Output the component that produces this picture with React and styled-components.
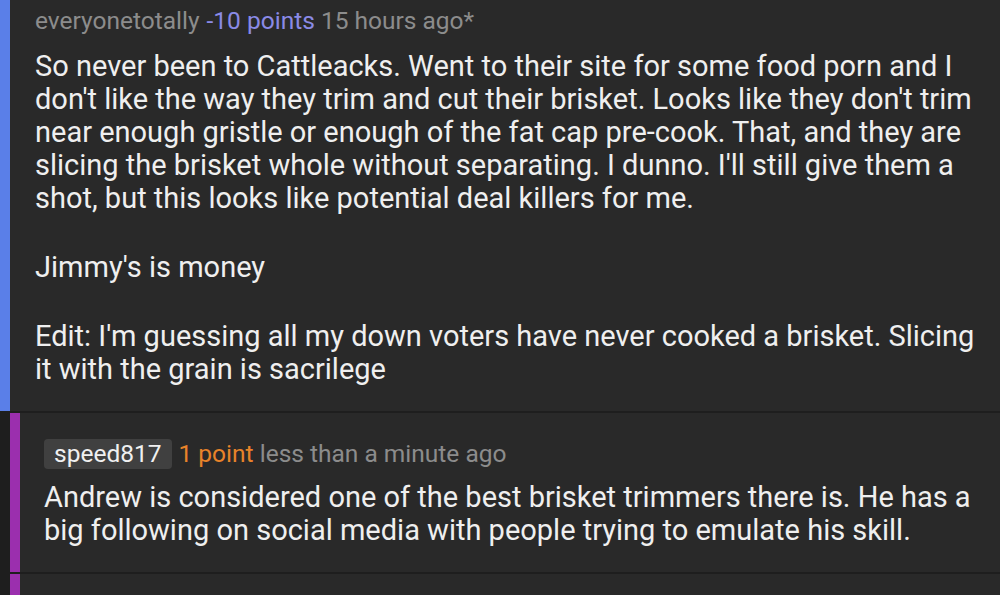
import React from 'react';
import styled, { createGlobalStyle } from 'styled-components';

const Global = createGlobalStyle`
  html, body {
    margin: 0;
    padding: 0;
    background: #292929;
    font-family: Roboto, "Noto Sans", sans-serif;
    overflow: hidden;
  }
`;

const Thread = styled.div`
  width: 1000px;
  height: 595px;
  overflow: hidden;
  background: #292929;
`;

const Comment = styled.div`
  display: flex;
  border-bottom: 2px solid #1e1e1e;
  padding-left: ${p => p.$depth * 10}px;
  background: ${p => (p.$depth ? '#1e1e1e' : '#292929')};
`;

const Bar = styled.div`
  width: 10px;
  flex-shrink: 0;
  background: ${p => p.$color};
`;

const Body = styled.div`
  flex: 1;
  background: #292929;
  padding: ${p => (p.$depth ? '25px 20px 25px 24px' : '5px 20px 25px 25px')};
  min-height: ${p => p.$min || 0}px;
`;

const Meta = styled.div`
  display: flex;
  align-items: center;
  gap: 7px;
  font-size: 24.5px;
  line-height: 32px;
  color: #8c8c8c;
  margin-bottom: ${p => (p.$badge ? '11px' : '13px')};
`;

const Author = styled.span`
  color: ${p => (p.$badge ? '#f0f0f0' : '#8c8c8c')};
  background: ${p => (p.$badge ? '#404040' : 'transparent')};
  border-radius: 4px;
  padding: ${p => (p.$badge ? '0 10px' : '0')};
  line-height: 30px;
`;

const Points = styled.span`
  color: ${p => p.$color};
`;

const Text = styled.p`
  margin: 0 0 36px;
  font-size: 29px;
  line-height: 33px;
  color: #efefef;
  &:last-child {
    margin-bottom: 0;
  }
`;

export default function App() {
  return (
    <Thread>
      <Global />
      <Comment $depth={0}>
        <Bar $color="#5a7fe8" />
        <Body $depth={0}>
          <Meta>
            <Author>everyonetotally</Author>
            <span>
              <Points $color="#8a8ae6">-10 points</Points> 15 hours ago*
            </span>
          </Meta>
          <Text>
            So never been to Cattleacks. Went to their site for some food porn and I don't
            like the way they trim and cut their brisket. Looks like they don't trim near
            enough gristle or enough of the fat cap pre-cook. That, and they are slicing the
            brisket whole without separating. I dunno. I'll still give them a shot, but this
            looks like potential deal killers for me.
          </Text>
          <Text>Jimmy's is money</Text>
          <Text>
            Edit: I'm guessing all my down voters have never cooked a brisket. Slicing it
            with the grain is sacrilege
          </Text>
        </Body>
      </Comment>
      <Comment $depth={1}>
        <Bar $color="#9b2fae" />
        <Body $depth={1}>
          <Meta $badge>
            <Author $badge>speed817</Author>
            <span>
              <Points $color="#e8832a">1 point</Points> less than a minute ago
            </span>
          </Meta>
          <Text>
            Andrew is considered one of the best brisket trimmers there is. He has a big
            following on social media with people trying to emulate his skill.
          </Text>
        </Body>
      </Comment>
      <Comment $depth={1}>
        <Bar $color="#9b2fae" />
        <Body $depth={1} $min={60} />
      </Comment>
    </Thread>
  );
}
